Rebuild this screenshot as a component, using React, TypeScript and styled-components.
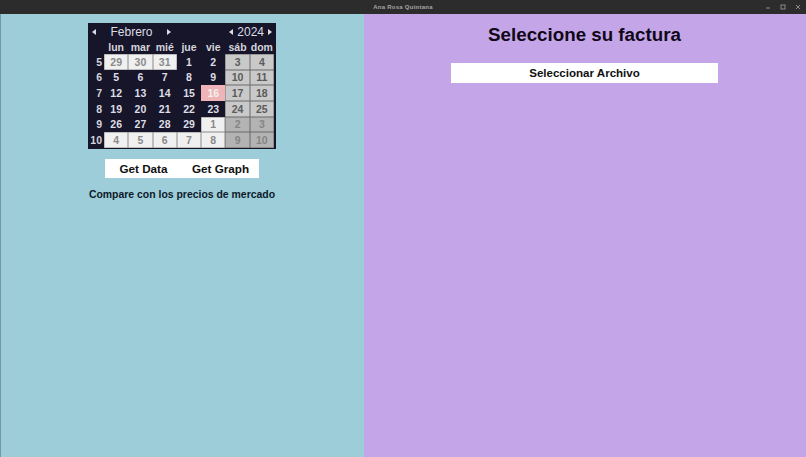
import React from 'react';
import styled, { createGlobalStyle } from 'styled-components';

const GlobalStyle = createGlobalStyle`
  html, body {
    margin: 0;
    height: 100%;
    overflow: hidden;
  }
  body {
    font-family: "Liberation Sans", Arial, sans-serif;
  }
`;

const Window = styled.div`
  width: 806px;
  height: 457px;
  display: flex;
  flex-direction: column;
`;

const TitleBar = styled.div`
  height: 14px;
  background: #2c2c2c;
  display: grid;
  grid-template-columns: 1fr auto 1fr;
  align-items: center;
`;

const WindowTitle = styled.div`
  grid-column: 2;
  color: #a4a4a4;
  font-size: 6px;
  font-weight: bold;
  letter-spacing: 0.25px;
`;

const WindowControls = styled.div`
  justify-self: end;
  display: flex;
  align-items: center;
  gap: 9px;
  padding-right: 5px;
`;

const ControlIcon = styled.svg`
  display: block;
  width: 6px;
  height: 6px;
  stroke: #8a8a8a;
  stroke-width: 1;
  fill: none;
`;

const Panels = styled.div`
  flex: 1;
  display: flex;
`;

const LeftPanel = styled.div`
  width: 364px;
  background: #9ccdd8;
  border-left: 1px solid #6d9aa5;
  display: flex;
  flex-direction: column;
  align-items: center;
  padding: 9px 1px 0 0;
  box-sizing: border-box;
`;

const RightPanel = styled.div`
  flex: 1;
  background: #c4a6e8;
  display: flex;
  flex-direction: column;
  align-items: center;
`;

const Calendar = styled.div`
  width: 188px;
  height: 126px;
  box-sizing: border-box;
  background: #16152a;
  border: 1px solid #16152a;
  border-right-width: 2px;
  display: flex;
  flex-direction: column;
`;

const CalendarHeader = styled.div`
  height: 15px;
  display: flex;
  align-items: center;
  color: #dcdce2;
  font-size: 12px;
`;

const Arrow = styled.span<{ $dir: 'left' | 'right' }>`
  width: 0;
  height: 0;
  border-top: 3px solid transparent;
  border-bottom: 3px solid transparent;
  ${(p) => (p.$dir === 'left' ? 'border-right: 4px solid #dcdce2;' : 'border-left: 4px solid #dcdce2;')}
`;

const MonthGroup = styled.div`
  display: flex;
  align-items: center;
  padding-left: 3px;
`;

const MonthName = styled.span`
  width: 71px;
  text-align: center;
  box-sizing: border-box;
`;

const YearGroup = styled.div`
  margin-left: auto;
  display: flex;
  align-items: center;
  gap: 4px;
  padding-right: 2px;
`;

const DaysGrid = styled.div`
  display: grid;
  grid-template-columns: 15px repeat(7, 1fr);
  grid-template-rows: 15px repeat(6, 1fr);
  flex: 1;
  font-size: 10.5px;
  font-weight: bold;
`;

const WeekdayLabel = styled.div`
  color: #d4d4dc;
  display: flex;
  align-items: center;
  justify-content: center;
`;

const WeekNumber = styled.div`
  color: #d4d4dc;
  display: flex;
  align-items: center;
  justify-content: flex-end;
  padding-right: 2px;
`;

type DayKind = 'month' | 'other' | 'weekend' | 'otherWeekend' | 'today';

const dayStyles: Record<DayKind, string> = {
  month: 'background: #16152a; color: #dedee4;',
  other: 'background: #f0f0f0; color: #8a8a8a; box-shadow: inset 0 0 0 0.5px #8a8a8a;',
  weekend: 'background: #c9c9c9; color: #5a5a5a; box-shadow: inset 0 0 0 0.5px #6a6a6a;',
  otherWeekend: 'background: #b3b3b3; color: #858585; box-shadow: inset 0 0 0 0.5px #6a6a6a;',
  today: 'background: #eeb4b8; color: #f6efef;',
};

const Day = styled.div<{ $kind: DayKind }>`
  display: flex;
  align-items: center;
  justify-content: center;
  ${(p) => dayStyles[p.$kind]}
`;

const ButtonRow = styled.div`
  margin-top: 10px;
  width: 154px;
  height: 19px;
  background: #fff;
  display: grid;
  grid-template-columns: 77px 77px;
`;

const ActionButton = styled.button`
  border: none;
  background: transparent;
  padding: 0;
  color: #111;
  font: bold 11.7px "Liberation Sans", Arial, sans-serif;
`;

const CompareText = styled.p`
  margin: 10px 0 0;
  color: #0d1a2a;
  font-size: 10.45px;
  font-weight: bold;
  line-height: 14px;
`;

const Heading = styled.h1`
  margin: 9px 1px 0 0;
  color: #100818;
  font-size: 18.75px;
  font-weight: bold;
  line-height: 23px;
`;

const FileButton = styled.button`
  margin: 17px 1px 0 0;
  width: 267px;
  height: 20px;
  border: none;
  background: #fff;
  padding: 0;
  color: #111;
  font: bold 11.55px "Liberation Sans", Arial, sans-serif;
`;

const weekdays = ['lun', 'mar', 'mié', 'jue', 'vie', 'sáb', 'dom'];

const weeks: { num: number; days: [number, boolean][] }[] = [
  { num: 5, days: [[29, true], [30, true], [31, true], [1, false], [2, false], [3, false], [4, false]] },
  { num: 6, days: [[5, false], [6, false], [7, false], [8, false], [9, false], [10, false], [11, false]] },
  { num: 7, days: [[12, false], [13, false], [14, false], [15, false], [16, false], [17, false], [18, false]] },
  { num: 8, days: [[19, false], [20, false], [21, false], [22, false], [23, false], [24, false], [25, false]] },
  { num: 9, days: [[26, false], [27, false], [28, false], [29, false], [1, true], [2, true], [3, true]] },
  { num: 10, days: [[4, true], [5, true], [6, true], [7, true], [8, true], [9, true], [10, true]] },
];

const kindOf = (day: number, other: boolean, col: number): DayKind => {
  const weekend = col >= 5;
  if (!other && day === 16) return 'today';
  if (other) return weekend ? 'otherWeekend' : 'other';
  return weekend ? 'weekend' : 'month';
};

export default function App() {
  return (
    <Window>
      <GlobalStyle />
      <TitleBar>
        <WindowTitle>Ana Rosa Quintana</WindowTitle>
        <WindowControls>
          <ControlIcon viewBox="0 0 6 6"><path d="M1 4h4" /></ControlIcon>
          <ControlIcon viewBox="0 0 6 6"><rect x="1" y="1" width="4" height="4" /></ControlIcon>
          <ControlIcon viewBox="0 0 6 6"><path d="M1 1l4 4M5 1L1 5" /></ControlIcon>
        </WindowControls>
      </TitleBar>
      <Panels>
        <LeftPanel>
          <Calendar>
            <CalendarHeader>
              <MonthGroup>
                <Arrow $dir="left" />
                <MonthName>Febrero</MonthName>
                <Arrow $dir="right" />
              </MonthGroup>
              <YearGroup>
                <Arrow $dir="left" />
                <span>2024</span>
                <Arrow $dir="right" />
              </YearGroup>
            </CalendarHeader>
            <DaysGrid>
              <span />
              {weekdays.map((d) => (
                <WeekdayLabel key={d}>{d}</WeekdayLabel>
              ))}
              {weeks.map((w) => (
                <React.Fragment key={w.num}>
                  <WeekNumber>{w.num}</WeekNumber>
                  {w.days.map(([day, other], col) => (
                    <Day key={col} $kind={kindOf(day, other, col)}>{day}</Day>
                  ))}
                </React.Fragment>
              ))}
            </DaysGrid>
          </Calendar>
          <ButtonRow>
            <ActionButton>Get Data</ActionButton>
            <ActionButton>Get Graph</ActionButton>
          </ButtonRow>
          <CompareText>Compare con los precios de mercado</CompareText>
        </LeftPanel>
        <RightPanel>
          <Heading>Seleccione su factura</Heading>
          <FileButton>Seleccionar Archivo</FileButton>
        </RightPanel>
      </Panels>
    </Window>
  );
}
